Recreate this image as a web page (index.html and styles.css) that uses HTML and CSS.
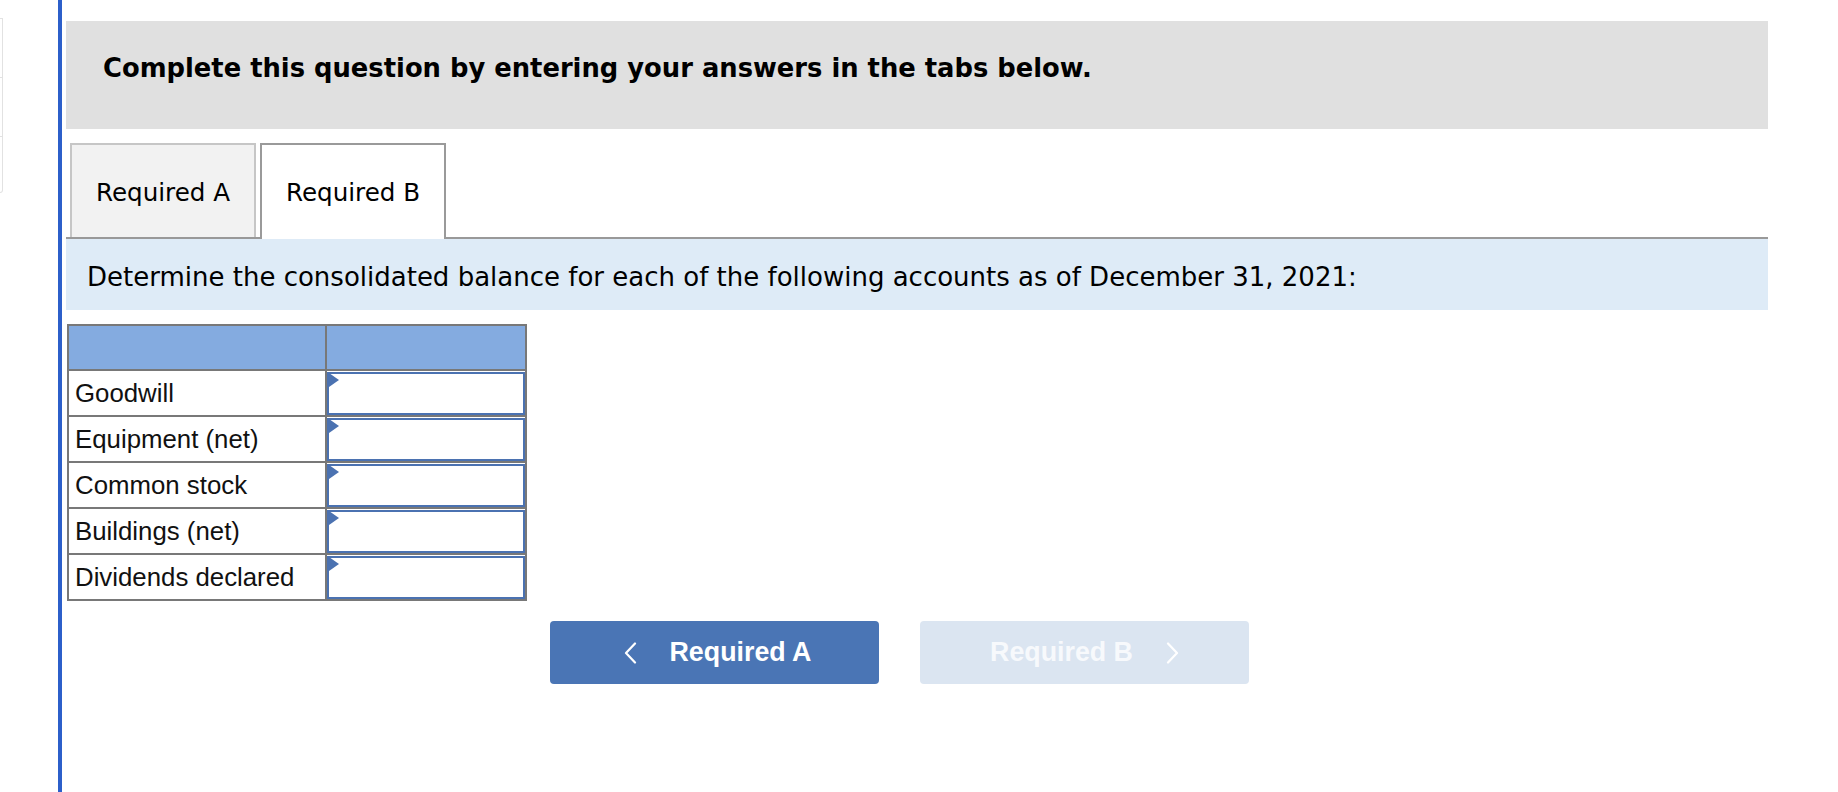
FILE: index.html
```html
<!DOCTYPE html>
<html lang="en">
<head>
<meta charset="utf-8">
<title>Required B</title>
<link rel="stylesheet" href="styles.css">
</head>
<body>
<div class="page">
  <aside class="sidebar">
    <div class="side-seg"></div>
    <div class="side-seg"></div>
    <div class="side-seg last"></div>
  </aside>
  <main class="main">
    <div class="content">
      <div class="question-header">Complete this question by entering your answers in the tabs below.</div>
      <div class="tabs">
        <div class="tab">Required A</div>
        <div class="tab active">Required B</div>
      </div>
      <div class="instruction">Determine the consolidated balance for each of the following accounts as of December 31, 2021:</div>
      <table class="balances">
        <colgroup><col class="col-label"><col class="col-input"></colgroup>
        <thead>
          <tr><th></th><th></th></tr>
        </thead>
        <tbody>
          <tr><td class="label">Goodwill</td><td class="entry"><span class="marker"></span><input type="text" aria-label="Goodwill"></td></tr>
          <tr><td class="label">Equipment (net)</td><td class="entry"><span class="marker"></span><input type="text" aria-label="Equipment (net)"></td></tr>
          <tr><td class="label">Common stock</td><td class="entry"><span class="marker"></span><input type="text" aria-label="Common stock"></td></tr>
          <tr><td class="label">Buildings (net)</td><td class="entry"><span class="marker"></span><input type="text" aria-label="Buildings (net)"></td></tr>
          <tr><td class="label">Dividends declared</td><td class="entry"><span class="marker"></span><input type="text" aria-label="Dividends declared"></td></tr>
        </tbody>
      </table>
      <div class="nav">
        <button class="nav-btn prev" type="button">
          <svg class="chev" width="13" height="22" viewBox="0 0 13 22"><polyline points="11,1.5 2,11 11,20.5" fill="none" stroke="#ffffff" stroke-width="2.2" stroke-linecap="round" stroke-linejoin="round"/></svg>
          <span>Required A</span>
        </button>
        <button class="nav-btn next" type="button" disabled>
          <span>Required B</span>
          <svg class="chev" width="13" height="22" viewBox="0 0 13 22"><polyline points="2,1.5 11,11 2,20.5" fill="none" stroke="#ffffff" stroke-width="2.2" stroke-linecap="round" stroke-linejoin="round"/></svg>
        </button>
      </div>
    </div>
  </main>
</div>
</body>
</html>
```

FILE: styles.css
```css
html, body {
  margin: 0;
  padding: 0;
  background: #ffffff;
}

.page {
  display: flex;
  align-items: flex-start;
  min-height: 792px;
}

.sidebar {
  width: 3px;
  margin-top: 18px;
  display: flex;
  flex-direction: column;
}

.side-seg {
  height: 59px;
  border-top: 1px solid #e2e2e2;
  border-right: 1px solid #e2e2e2;
  box-sizing: border-box;
}

.side-seg.last {
  height: 57px;
  border-bottom: 1px solid #e2e2e2;
  border-bottom-right-radius: 3px;
}

.main {
  margin-left: 55px;
  border-left: 4px solid #2c5fca;
  padding-left: 4px;
  min-height: 792px;
  box-sizing: border-box;
}

.content {
  width: 1702px;
}

.question-header {
  margin-top: 21px;
  height: 108px;
  box-sizing: border-box;
  padding: 32px 0 0 37px;
  background: #e0e0e0;
  font-family: "DejaVu Sans", Verdana, sans-serif;
  font-weight: bold;
  font-size: 25.8px;
  line-height: 30px;
  color: #000000;
}

.tabs {
  display: flex;
  align-items: flex-start;
  gap: 4px;
  margin-top: 14px;
  padding-left: 4px;
  border-bottom: 2px solid #999999;
}

.tab {
  width: 186px;
  height: 94px;
  box-sizing: border-box;
  border: 2px solid #c6c6c6;
  border-bottom: none;
  background: #f2f2f2;
  display: flex;
  align-items: center;
  justify-content: center;
  padding-top: 2px;
  font-family: "DejaVu Sans", Verdana, sans-serif;
  font-size: 24.6px;
  color: #000000;
}

.tab.active {
  height: 96px;
  margin-bottom: -2px;
  border-color: #9a9a9a;
  background: #ffffff;
  padding-bottom: 2px;
}

.instruction {
  height: 71px;
  box-sizing: border-box;
  padding: 23px 0 0 21px;
  background: #deebf7;
  font-family: "DejaVu Sans", Verdana, sans-serif;
  font-size: 26px;
  line-height: 30px;
  color: #000000;
}

.balances {
  margin: 14px 0 0 1px;
  border-collapse: collapse;
  border: 2px solid #787878;
  font-family: "Liberation Sans", Arial, sans-serif;
  font-size: 25.8px;
  color: #111111;
}

.col-label { width: 258px; }
.col-input { width: 200px; }

.balances th {
  height: 43px;
  padding: 0;
  background: #84abe0;
  border: 2px solid #787878;
}

.balances td {
  border: 2px solid #787878;
  height: 45px;
  box-sizing: border-box;
}

.balances td.label {
  padding: 0 0 0 6px;
  white-space: nowrap;
}

.balances td.entry {
  position: relative;
  padding: 1px 0 0 0;
}

.balances input {
  display: block;
  width: 100%;
  height: 43px;
  box-sizing: border-box;
  margin: 0;
  border: 2px solid #4b72b1;
  background: #ffffff;
  outline: none;
  font-family: "Liberation Sans", Arial, sans-serif;
  font-size: 24px;
}

.marker {
  position: absolute;
  left: 2px;
  top: 2px;
  width: 0;
  height: 0;
  border-top: 7px solid transparent;
  border-bottom: 7px solid transparent;
  border-left: 10px solid #4b72b1;
}

.nav {
  display: flex;
  gap: 41px;
  margin-top: 20px;
  padding-left: 484px;
}

.nav-btn {
  width: 329px;
  height: 63px;
  border: none;
  border-radius: 4px;
  display: flex;
  align-items: center;
  justify-content: center;
  gap: 33px;
  font-family: "Liberation Sans", Arial, sans-serif;
  font-weight: bold;
  font-size: 26.8px;
  color: #ffffff;
  padding: 0;
}

.nav-btn.prev {
  background: #4a75b5;
  padding-left: 6px;
}

.nav-btn.next {
  background: #dbe5f1;
  color: #f7f9fc;
}

.chev {
  display: block;
}
```
